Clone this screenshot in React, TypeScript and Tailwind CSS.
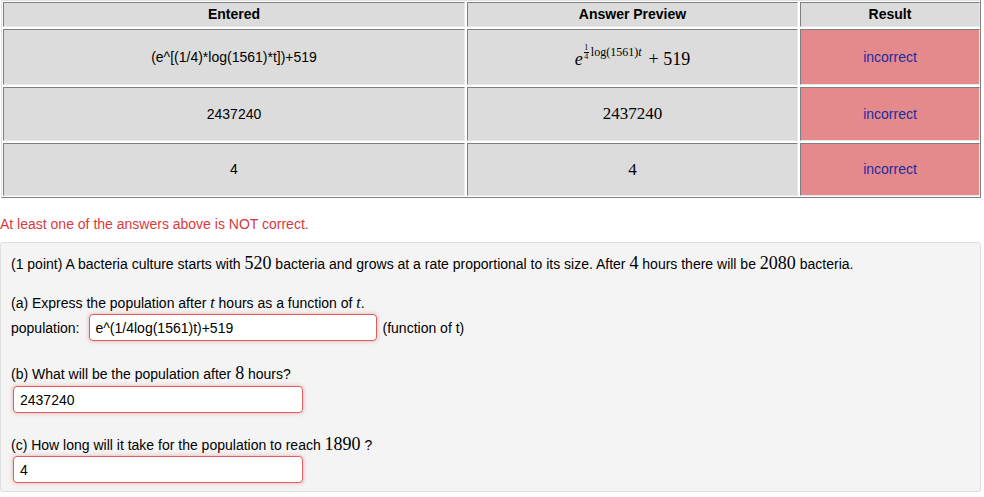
import React from 'react';

const sans = { fontFamily: '"Liberation Sans", Arial, Helvetica, sans-serif' };
const serif = { fontFamily: '"Liberation Serif", "Times New Roman", serif' };

const rows = [
  { entered: '(e^[(1/4)*log(1561)*t])+519', preview: 'formula', h: 'h-[56px]' },
  { entered: '2437240', preview: '2437240', h: 'h-[54px]' },
  { entered: '4', preview: '4', h: 'h-[53px]' },
];

function Cell({ children, className = '' }: { children: React.ReactNode; className?: string }) {
  return (
    <div
      className={`flex items-center justify-center border-t border-l border-t-[#7f7f7f] border-l-[#7f7f7f] border-r border-b border-r-[#e8e8e8] border-b-[#e8e8e8] ${className}`}
    >
      {children}
    </div>
  );
}

function Formula() {
  return (
    <span className="inline-flex items-end text-[18px] text-black leading-none whitespace-nowrap mt-[-3px]" style={serif}>
      <span className="italic">e</span>
      <span className="inline-flex items-center mb-[7px] text-[12px] leading-none">
        <span className="flex flex-col items-center text-[8px] leading-[8px] mx-[1px]">
          <span>1</span>
          <span className="w-[5px] border-t border-black" />
          <span>4</span>
        </span>
        <span className="ml-[1px]">log(1561)</span>
        <span className="italic">t</span>
      </span>
      <span className="ml-[7px]">+ 519</span>
    </span>
  );
}

function Field({ value, width }: { value: string; width: string }) {
  return (
    <div
      className={`${width} h-[27px] bg-white border border-[#dc6060] rounded-[4px] flex items-center px-[6px] text-[14px] text-black shadow-[0_0_4px_rgba(220,80,80,0.45)]`}
    >
      {value}
    </div>
  );
}

export default function App() {
  return (
    <div className="w-[984px] h-[497px] bg-white overflow-hidden text-black" style={sans}>
      <div className="ml-[1px] w-[980px] border border-t-[#e0e0e0] border-l-[#e0e0e0] border-r-[#7f7f7f] border-b-[#7f7f7f] p-[1px]">
        <div className="grid grid-cols-[462px_331px_180px] gap-[2px]">
          <Cell className="h-[25px] bg-[#dcdcdc] font-bold text-[14px]">Entered</Cell>
          <Cell className="h-[25px] bg-[#dcdcdc] font-bold text-[14px]">Answer Preview</Cell>
          <Cell className="h-[25px] bg-[#dcdcdc] font-bold text-[14px]">Result</Cell>
          {rows.map((r, i) => (
            <React.Fragment key={i}>
              <Cell className={`${r.h} bg-[#dcdcdc] text-[14px]`}>{r.entered}</Cell>
              <Cell className={`${r.h} bg-[#dcdcdc]`}>
                {r.preview === 'formula' ? (
                  <Formula />
                ) : (
                  <span className="text-[17px]" style={serif}>{r.preview}</span>
                )}
              </Cell>
              <Cell className={`${r.h} bg-[#e48a8d] text-[14px] text-[#1c2b9e]`}>incorrect</Cell>
            </React.Fragment>
          ))}
        </div>
      </div>

      <div className="mt-[18px] text-[14px] text-[#d93a3f] leading-[16px]">
        At least one of the answers above is NOT correct.
      </div>

      <div className="mt-[10px] w-[981px] h-[250px] bg-[#f4f4f4] border border-[#dedede] rounded-[3px] px-[10px] pt-[10px] text-[14px] leading-[20px]">
        <p>
          (1 point) A bacteria culture starts with <span className="text-[18px]" style={serif}>520</span> bacteria and grows at a rate
          proportional to its size. After <span className="text-[18px]" style={serif}>4</span> hours there will be{' '}
          <span className="text-[18px]" style={serif}>2080</span> bacteria.
        </p>

        <p className="mt-[19px]">
          (a) Express the population after <span className="italic text-[16px]" style={serif}>t</span> hours as a function of{' '}
          <span className="italic text-[16px]" style={serif}>t</span>.
        </p>
        <div className="flex items-center mt-[1px]">
          <span className="mr-[9px]">population:</span>
          <Field value="e^(1/4log(1561)t)+519" width="w-[288px]" />
          <span className="ml-[6px]">(function of t)</span>
        </div>

        <p className="mt-[22px]">
          (b) What will be the population after <span className="text-[18px]" style={serif}>8</span> hours?
        </p>
        <div className="mt-[2px] ml-[2px]">
          <Field value="2437240" width="w-[290px]" />
        </div>

        <p className="mt-[21px]">
          (c) How long will it take for the population to reach <span className="text-[18px]" style={serif}>1890</span> ?
        </p>
        <div className="mt-[1px] ml-[2px]">
          <Field value="4" width="w-[290px]" />
        </div>
      </div>
    </div>
  );
}
